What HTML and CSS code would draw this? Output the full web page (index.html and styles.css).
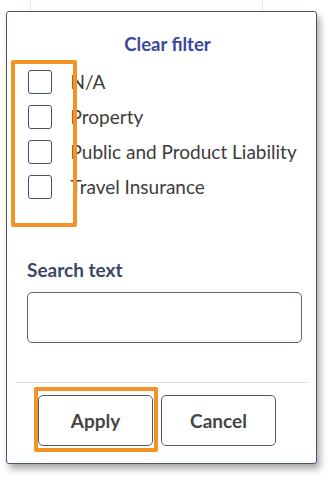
FILE: index.html
```html
<!DOCTYPE html>
<html>
<head>
<meta charset="utf-8">
<link rel="stylesheet" href="styles.css">
</head>
<body>
<div class="stage">
  <div class="panel">
    <div class="title">Clear filter</div>
    <div class="list">
      <label class="row"><span class="box"></span><span class="txt">N/A</span></label>
      <label class="row"><span class="box"></span><span class="txt">Property</span></label>
      <label class="row"><span class="box"></span><span class="txt">Public and Product Liability</span></label>
      <label class="row"><span class="box"></span><span class="txt">Travel Insurance</span></label>
      <div class="hl hl-list"></div>
    </div>
    <div class="label">Search text</div>
    <div class="input"></div>
    <div class="divider"></div>
    <div class="buttons">
      <div class="btn-wrap">
        <div class="btn">Apply</div>
        <div class="hl hl-btn"></div>
      </div>
      <div class="btn">Cancel</div>
    </div>
  </div>
</div>
</body>
</html>
```
FILE: styles.css
```css
html, body {
  margin: 0;
  padding: 0;
  background: #ffffff;
}
body {
  width: 332px;
  height: 480px;
  overflow: hidden;
  font-family: Lato, "Open Sans", sans-serif;
  background-image:
    linear-gradient(#e6e6e6, #e6e6e6),
    linear-gradient(#e6e6e6, #e6e6e6);
  background-size: 1px 12px, 1px 12px;
  background-position: 30px 0, 262px 0;
  background-repeat: no-repeat;
}
.stage {
  padding: 11px 0 0 6px;
}
.panel {
  box-sizing: border-box;
  width: 311px;
  height: 453px;
  background: #fff;
  border: 1.5px solid #4b5670;
  border-radius: 3px;
  box-shadow: 3px 5px 7px rgba(0, 0, 0, 0.34);
  padding: 22px 14px 0 20px;
}
.title {
  text-align: center;
  font-weight: 700;
  font-size: 18.5px;
  line-height: 20px;
  color: #3b479a;
  margin-right: -6px;
}
.list {
  position: relative;
  margin-top: 10px;
}
.row {
  display: flex;
  align-items: center;
  height: 35px;
}
.box {
  box-sizing: border-box;
  width: 24px;
  height: 24px;
  border: 1.5px solid #45506a;
  border-radius: 3px;
  margin-left: 0.5px;
  flex: none;
}
.txt {
  margin-left: 19px;
  font-size: 19px;
  color: #3c3c3c;
  white-space: nowrap;
}
.hl {
  position: absolute;
  box-sizing: border-box;
  border: 4px solid #f39325;
  border-radius: 2px;
}
.hl-list {
  left: -16px;
  top: -4px;
  width: 66px;
  height: 167px;
}
.label {
  margin-top: 55px;
  font-size: 19px;
  font-weight: 700;
  line-height: 22px;
  color: #3a4768;
}
.input {
  box-sizing: border-box;
  margin-top: 11px;
  height: 51px;
  border: 1.5px solid #58627a;
  border-radius: 5px;
}
.divider {
  margin: 39px -6px 0 -12px;
  height: 1px;
  background: #dcdcdc;
}
.buttons {
  display: flex;
  gap: 8px;
  margin-top: 12px;
  padding-left: 11px;
}
.btn-wrap {
  position: relative;
}
.btn {
  box-sizing: border-box;
  width: 115px;
  height: 51px;
  border: 1.2px solid #5a5a5a;
  border-radius: 5px;
  display: flex;
  align-items: center;
  justify-content: center;
  font-size: 19px;
  font-weight: 700;
  color: #454545;
}
.hl-btn {
  left: -4px;
  top: -8px;
  width: 124px;
  height: 65px;
}
```
